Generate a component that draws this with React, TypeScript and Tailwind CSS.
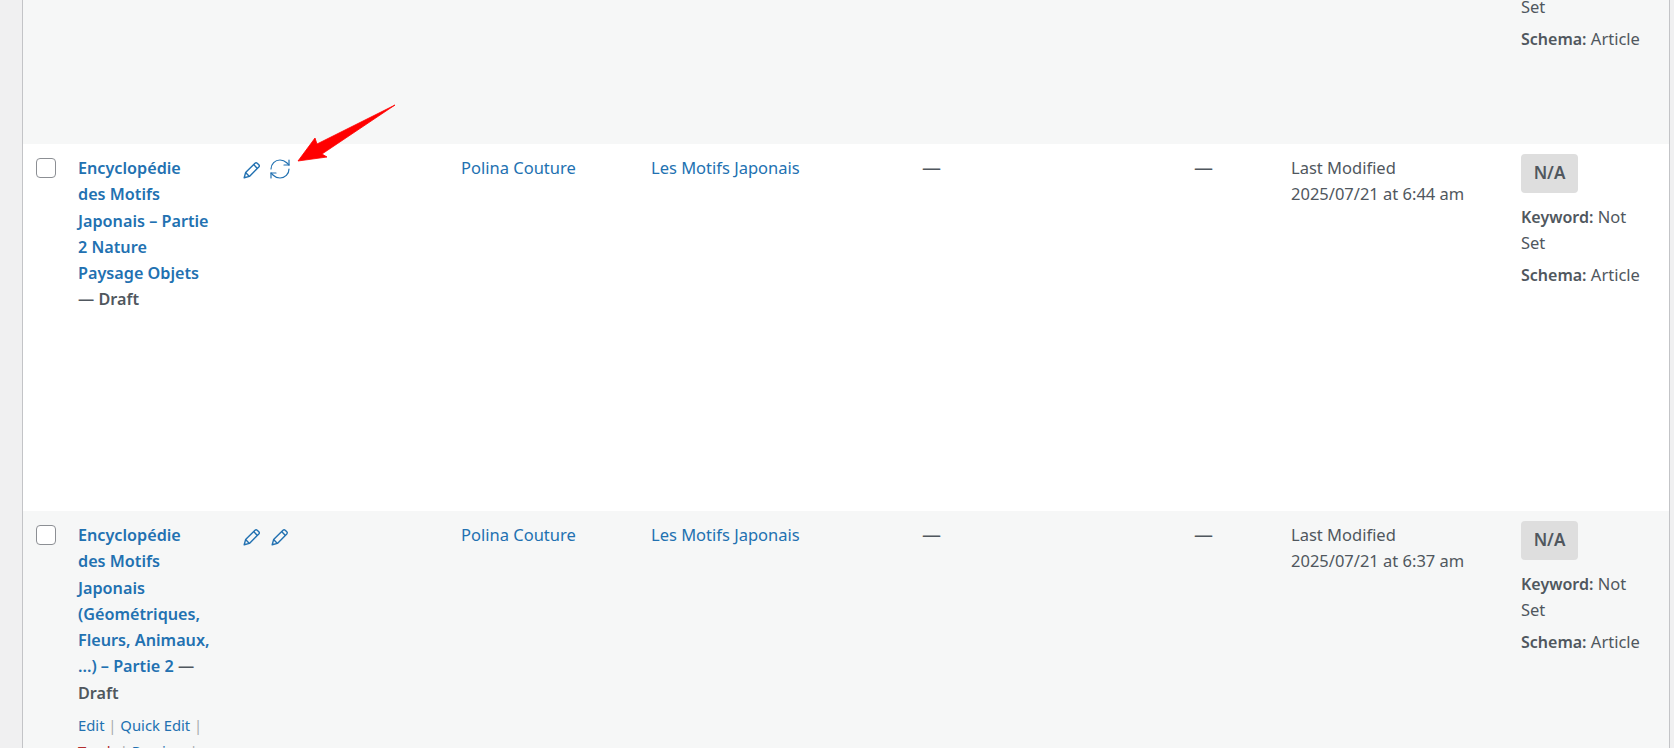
import { RefreshCw } from "lucide-react";

const rowClass =
  "grid grid-cols-[55px_165px_218px_190px_271px_272px_97px_230px_148px] overflow-hidden";

const PencilIcon = () => (
  <svg width="18" height="18" viewBox="0 0 18 18" fill="none" stroke="currentColor" strokeWidth="1.4" strokeLinejoin="round">
    <path d="M1.2 16.8 2.6 11.6 12 2.2a1.6 1.6 0 0 1 2.2 0l1.6 1.6a1.6 1.6 0 0 1 0 2.2L6.4 15.4Z" />
    <path d="M10.6 3.6 14.4 7.4M2.6 11.6l3.8 3.8" />
  </svg>
);

const SeoCell = () => (
  <div className="w-[128px] pt-[10px]">
    <div className="flex h-[39px] w-[57px] items-center justify-center rounded-[4px] bg-[#dedede] text-[17px] font-semibold">
      N/A
    </div>
    <div className="mt-[11px]">
      <b className="text-[16px] font-semibold">Keyword:</b> Not Set
    </div>
    <div className="mt-[5px]">
      <b className="text-[16px] font-semibold">Schema:</b> Article
    </div>
  </div>
);

const Row = ({ lines, date, second, bg, children }: any) => (
  <div className={`${rowClass} h-[367px] ${bg}`}>
    <div className="pl-[13px] pt-[14px]">
      <div className="h-5 w-5 rounded-[4px] border border-[#8c8f94] bg-white" />
    </div>
    <div className="pt-[11px]">
      <div className="whitespace-nowrap text-[16.2px] font-semibold">{lines}</div>
      {children}
    </div>
    <div className="flex gap-[10px] pt-[17px] text-[#2271b1]">
      <PencilIcon />
      {second === "refresh" ? (
        <RefreshCw size={24} strokeWidth={1.2} className="-ml-[3px] -mt-[4px]" />
      ) : (
        <PencilIcon />
      )}
    </div>
    <div className="pt-[11px] text-[#2271b1]">Polina Couture</div>
    <div className="pt-[11px] text-[#2271b1]">Les Motifs Japonais</div>
    <div className="pt-[11px] text-[19px]">—</div>
    <div className="pt-[11px] text-[19px]">—</div>
    <div className="pt-[11px]">
      Last Modified
      <br />
      {date}
    </div>
    <SeoCell />
  </div>
);

export default function App() {
  return (
    <div className="relative h-[748px] overflow-hidden bg-[#f0f0f1] pl-[22px] pr-[4px] font-['Noto_Sans',sans-serif] text-[16.5px] leading-[26.25px] text-[#50575e]">
      <div className="border-x border-[#c3c4c7]">
        <div className={`${rowClass} h-[144px] bg-[#f6f7f7]`}>
          <div className="col-start-9 -mt-[6px]">
            <div>Set</div>
            <div className="mt-[6px]">
              <b className="text-[16px] font-semibold">Schema:</b> Article
            </div>
          </div>
        </div>

        <Row
          lines={
            <>
              <a className="text-[#2271b1]">
                Encyclopédie
                <br />
                des Motifs
                <br />
                Japonais – Partie
                <br />
                2 Nature
                <br />
                Paysage Objets
              </a>
              <br />— Draft
            </>
          }
          date="2025/07/21 at 6:44 am"
          second="refresh"
          bg="bg-white"
        />

        <Row
          lines={
            <>
              <a className="text-[#2271b1]">
                Encyclopédie
                <br />
                des Motifs
                <br />
                Japonais
                <br />
                (Géométriques,
                <br />
                Fleurs, Animaux,
                <br />
                ...) – Partie 2
              </a>{" "}
              —
              <br />
              Draft
            </>
          }
          date="2025/07/21 at 6:37 am"
          second="pencil"
          bg="bg-[#f6f7f7]"
        >
          <div className="mt-[6px] w-[140px] text-[14.8px] text-[#a7aaad]">
            <a className="text-[#2271b1]">Edit</a> | <a className="text-[#2271b1]">Quick Edit</a> |{" "}
            <a className="text-[#b32d2e]">Trash</a> | <a className="text-[#2271b1]">Preview</a> |
          </div>
        </Row>
      </div>

      {/* red annotation arrow */}
      <svg className="absolute left-0 top-0" width="1674" height="748" fill="none">
        <polygon
          points="395,105 317,144 315,138 298,161 327,157 322,154"
          fill="#ff0000"
          stroke="#ff0000"
          strokeWidth="0.8"
          strokeLinejoin="round"
        />
      </svg>
    </div>
  );
}
